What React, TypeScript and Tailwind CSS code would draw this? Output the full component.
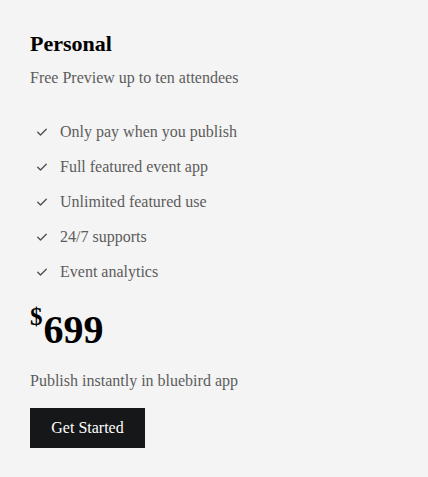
const features = [
  "Only pay when you publish",
  "Full featured event app",
  "Unlimited featured use",
  "24/7 supports",
  "Event analytics",
];

function Check() {
  return (
    <svg width="12" height="12" viewBox="0 0 24 24" fill="none" stroke="#505050" strokeWidth="2.8" strokeLinecap="round" strokeLinejoin="round">
      <path d="M3.5 12.5l5.5 5.5L20.5 6.5" />
    </svg>
  );
}

export default function App() {
  return (
    <div className="min-h-screen bg-[#f4f4f4] px-[30px] pt-[30px] font-['Liberation_Serif',serif]">
      <h2 className="text-[22px] leading-[28px] font-bold text-black">Personal</h2>
      <p className="mt-[9px] text-[16px] leading-[22px] text-[#5c5c5c]">Free Preview up to ten attendees</p>

      <ul className="mt-[25px] flex flex-col">
        {features.map((f) => (
          <li key={f} className="flex items-center h-[35px]">
            <span className="ml-[6px] mr-[12px] flex">
              <Check />
            </span>
            <span className="text-[16px] text-[#5c5c5c]">{f}</span>
          </li>
        ))}
      </ul>

      <div className="mt-[15px] flex items-start text-black font-bold">
        <span className="text-[25px] leading-[25px] mr-[1px]">$</span>
        <span className="text-[40px] leading-[48px] mt-[2px]">699</span>
      </div>

      <p className="mt-[16px] text-[16px] leading-[22px] text-[#5c5c5c]">Publish instantly in bluebird app</p>

      <button className="mt-[16px] w-[115px] h-[40px] bg-[#161719] text-white text-[16px]">Get Started</button>
    </div>
  );
}
